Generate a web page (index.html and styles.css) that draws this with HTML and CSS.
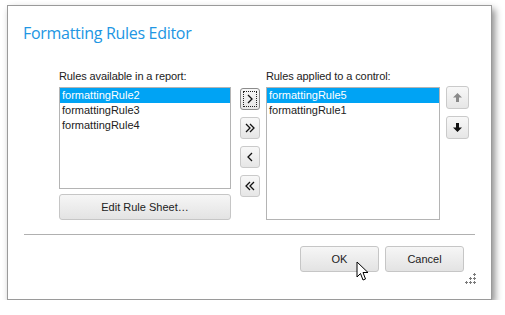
FILE: index.html
```html
<!DOCTYPE html>
<html>
<head>
<meta charset="utf-8">
<link rel="stylesheet" href="styles.css">
</head>
<body>
<div class="dialog">
  <div class="title">Formatting Rules Editor</div>
  <div class="main">
    <div class="col col-left">
      <div class="label">Rules available in a report:</div>
      <div class="listbox lb-left">
        <div class="item sel">formattingRule2</div>
        <div class="item">formattingRule3</div>
        <div class="item">formattingRule4</div>
      </div>
      <div class="btn btn-wide">Edit Rule Sheet…</div>
    </div>
    <div class="col col-mid">
      <div class="sbtn focus"><span class="dots"></span>
        <svg width="20" height="22" viewBox="0 0 20 22"><path d="M8 7 L12 11 L8 15" fill="none" stroke="#111" stroke-width="1.3"/></svg>
      </div>
      <div class="sbtn">
        <svg width="20" height="22" viewBox="0 0 20 22"><path d="M6 7 L10 11 L6 15 M10 7 L14 11 L10 15" fill="none" stroke="#111" stroke-width="1.3"/></svg>
      </div>
      <div class="sbtn">
        <svg width="20" height="22" viewBox="0 0 20 22"><path d="M12 7 L8 11 L12 15" fill="none" stroke="#111" stroke-width="1.3"/></svg>
      </div>
      <div class="sbtn">
        <svg width="20" height="22" viewBox="0 0 20 22"><path d="M10 7 L6 11 L10 15 M14 7 L10 11 L14 15" fill="none" stroke="#111" stroke-width="1.3"/></svg>
      </div>
    </div>
    <div class="col col-right">
      <div class="label">Rules applied to a control:</div>
      <div class="listbox lb-right">
        <div class="item sel">formattingRule5</div>
        <div class="item">formattingRule1</div>
      </div>
    </div>
    <div class="col col-ud">
      <div class="ubtn">
        <svg width="23" height="23" viewBox="0 0 23 23"><path d="M11.5 7 L16 11.5 L13 11.5 L13 16 L10 16 L10 11.5 L7 11.5 Z" fill="#8a8a8a"/></svg>
      </div>
      <div class="ubtn">
        <svg width="23" height="23" viewBox="0 0 23 23"><path d="M11.5 16 L16 11.5 L13 11.5 L13 7 L10 7 L10 11.5 L7 11.5 Z" fill="#111"/></svg>
      </div>
    </div>
  </div>
  <div class="sep"></div>
  <div class="footer">
    <div class="btn btn-ok">OK
      <svg class="cursor" width="14" height="22" viewBox="0 0 14 22"><path d="M1 1 L1 16 L4.5 12.5 L7 19 L9.5 18 L7 11.5 L12 11.5 Z" fill="#fff" stroke="#000" stroke-width="1" stroke-linejoin="miter"/></svg>
    </div>
    <div class="btn btn-cancel">Cancel</div>
  </div>
  <svg class="grip" width="12" height="12" viewBox="0 0 12 12" fill="#7a7a7a">
    <path d="M9 1h1v3h-1z M8 2h3v1h-3z"/>
    <path d="M5 5h1v3h-1z M4 6h3v1h-3z M9 5h1v3h-1z M8 6h3v1h-3z"/>
    <path d="M1 9h1v3h-1z M0 10h3v1h-3z M5 9h1v3h-1z M4 10h3v1h-3z M9 9h1v3h-1z M8 10h3v1h-3z"/>
  </svg>
</div>
</body>
</html>
```
FILE: styles.css
```css
html, body {
  margin: 0;
  padding: 0;
  background: #fff;
}
body {
  font-family: "Liberation Sans", Arial, sans-serif;
  font-size: 11px;
  color: #222;
}
.dialog {
  position: relative;
  margin: 5px 0 0 7px;
  width: 483px;
  height: 293px;
  border: 1px solid #9a9a9a;
  background: #fff;
  box-shadow: 3px 4px 7px rgba(0, 0, 0, 0.45);
}
.title {
  padding: 17px 0 0 15px;
  height: 20px;
  line-height: 20px;
  font-family: "Open Sans", "Noto Sans", sans-serif;
  font-size: 16px;
  letter-spacing: -0.3px;
  color: #2196e3;
}
.main {
  display: flex;
  align-items: flex-start;
  margin: 24px 0 0 51px;
}
.label {
  height: 15px;
  padding-top: 2px;
  line-height: 15px;
  margin-bottom: 3px;
  white-space: nowrap;
  letter-spacing: -0.1px;
}
.col-left {
  width: 172px;
}
.listbox {
  box-sizing: border-box;
  border: 1px solid #b4b4b4;
  background: #fff;
}
.lb-left {
  height: 102px;
}
.lb-right {
  height: 133px;
}
.listbox .item {
  height: 15px;
  line-height: 15px;
  padding-left: 2px;
  font-size: 11px;
  color: #222;
  white-space: nowrap;
}
.listbox .item.sel {
  background: #00a3f4;
  color: #fff;
}
.btn {
  box-sizing: border-box;
  height: 26px;
  line-height: 24px;
  text-align: center;
  border: 1px solid #c6c6c6;
  border-radius: 3px;
  background: linear-gradient(#f6f6f6, #e3e3e3);
  color: #222;
}
.btn-wide {
  margin-top: 5px;
}
.col-mid {
  margin-left: 9px;
  padding-top: 21px;
  width: 20px;
}
.sbtn {
  position: relative;
  box-sizing: border-box;
  width: 20px;
  height: 22px;
  margin-bottom: 7px;
  border: 1px solid #cacaca;
  border-radius: 3px;
  background: linear-gradient(#f8f8f8, #e6e6e6);
}
.sbtn svg, .ubtn svg {
  display: block;
  margin: -1px;
}
.sbtn.focus {
  border-color: #8c8c8c;
}
.dots {
  position: absolute;
  left: 2px;
  top: 2px;
  right: 2px;
  bottom: 2px;
  border: 1px dotted #222;
}
.col-right {
  margin-left: 6px;
  width: 174px;
}
.col-ud {
  margin-left: 6px;
  padding-top: 19px;
  width: 23px;
}
.ubtn {
  box-sizing: border-box;
  width: 23px;
  height: 23px;
  margin-bottom: 7px;
  border: 1px solid #cacaca;
  border-radius: 3px;
  background: linear-gradient(#f8f8f8, #e6e6e6);
}
.sep {
  margin: 14px 0 0 16px;
  width: 451px;
  height: 1px;
  background: #b0b0b0;
}
.footer {
  display: flex;
  margin: 11px 0 0 292px;
  gap: 6px;
}
.btn-ok, .btn-cancel {
  width: 79px;
}
.btn-ok {
  position: relative;
}
.cursor {
  position: absolute;
  left: 55px;
  top: 14px;
}
.grip {
  position: absolute;
  left: 457px;
  top: 266px;
}
```
